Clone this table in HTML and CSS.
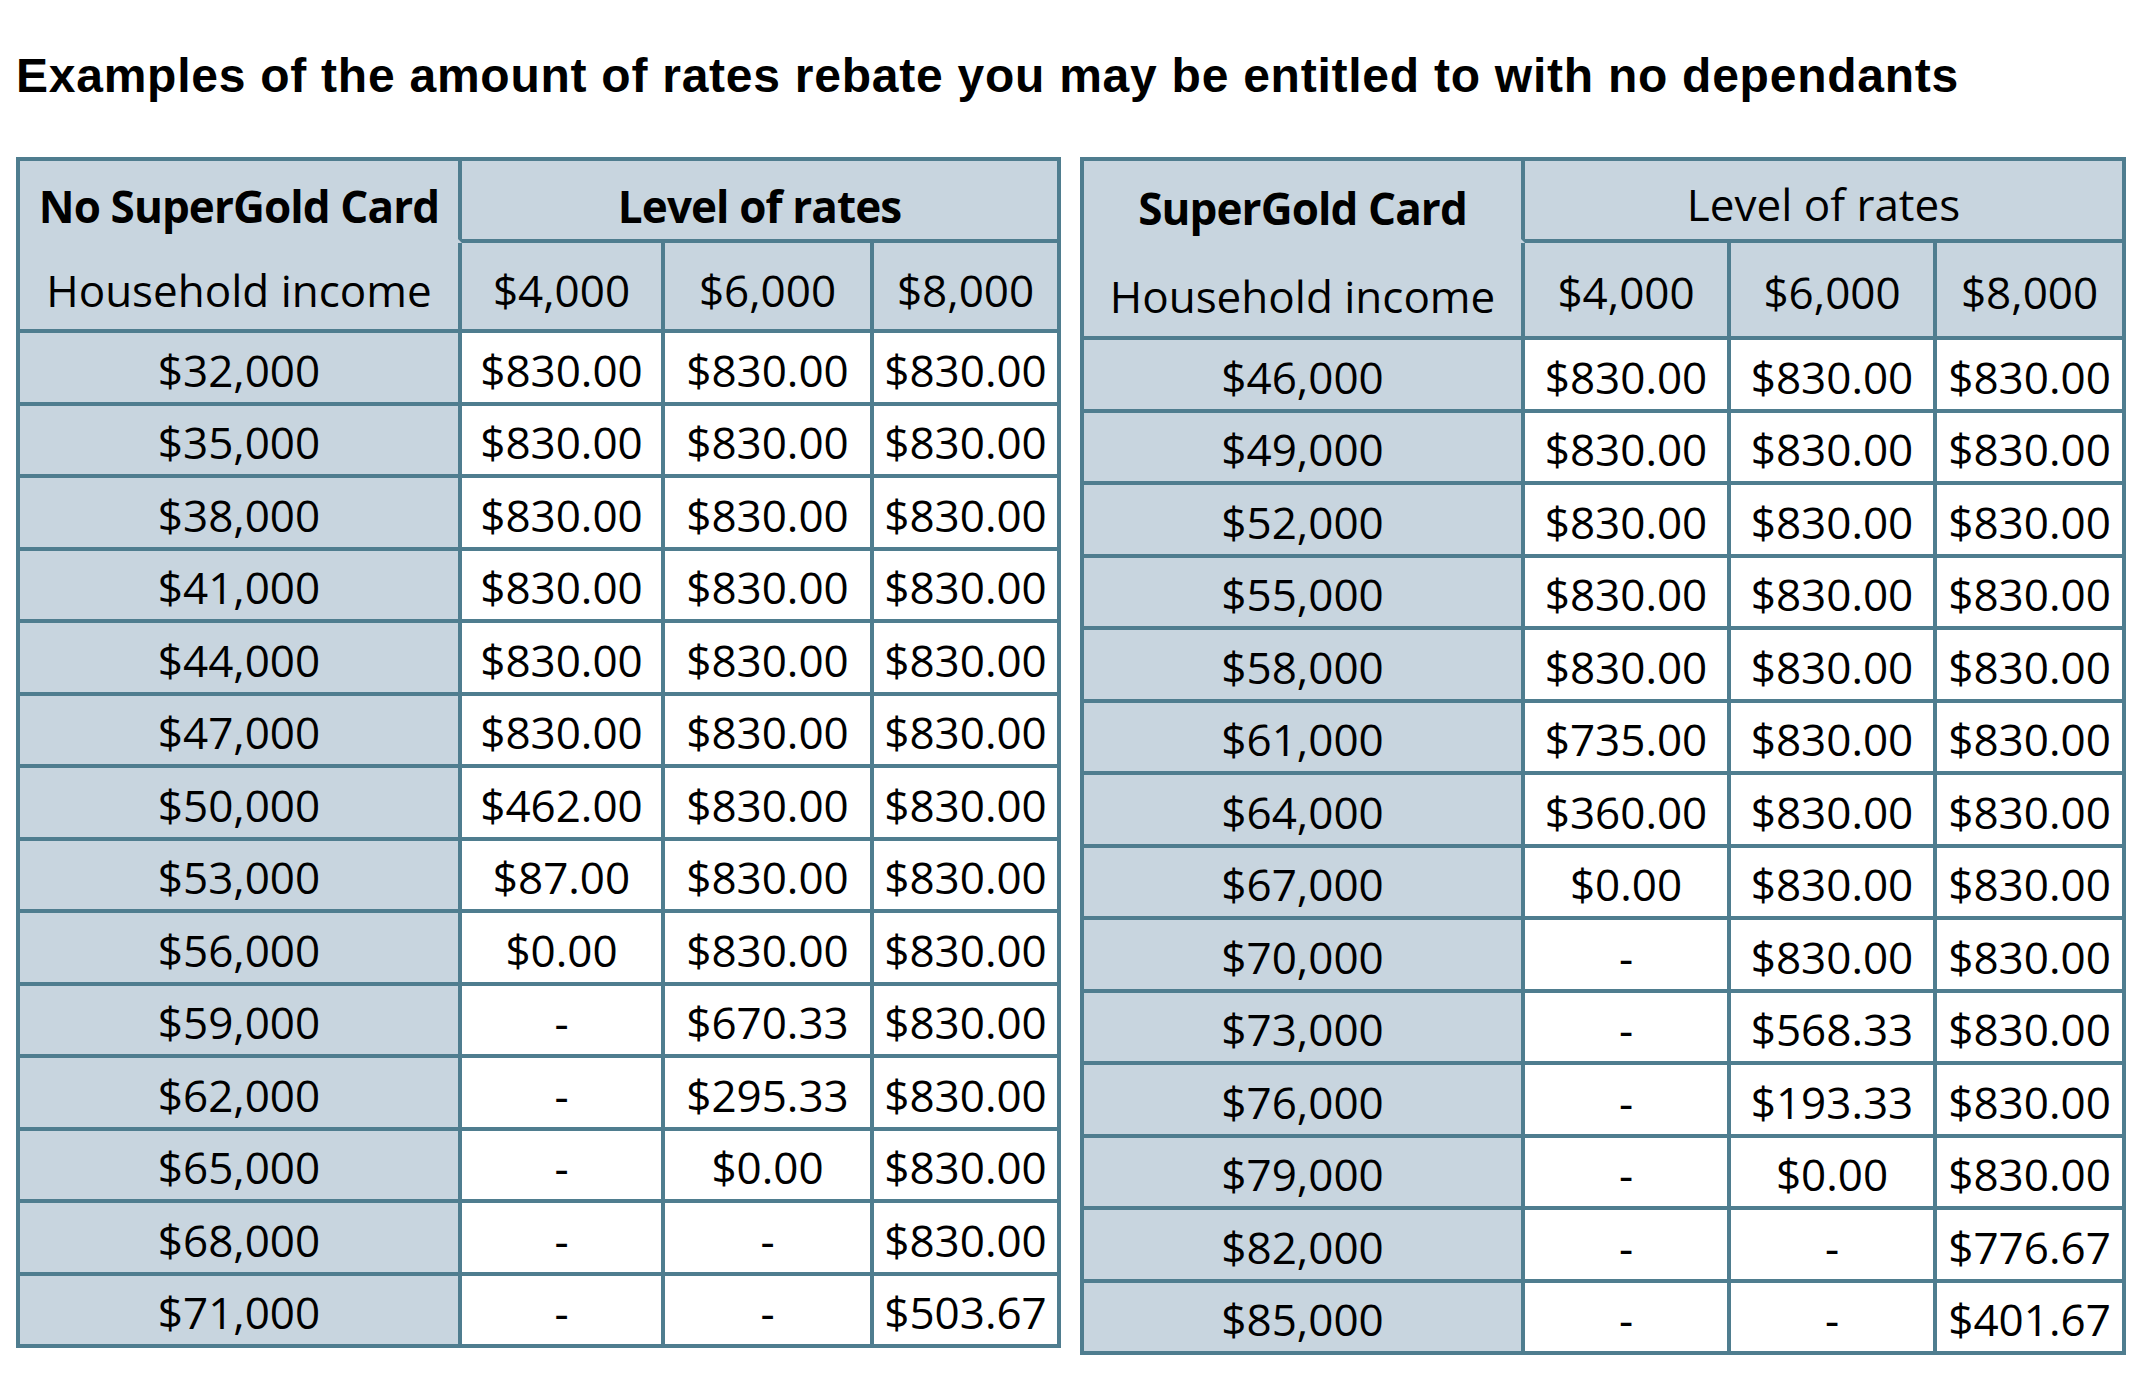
FILE: index.html
```html
<!DOCTYPE html>
<html lang="en">
<head>
<meta charset="utf-8">
<title>Rates rebate examples</title>
<link rel="stylesheet" href="styles.css">
</head>
<body>
<main class="page">
  <h1 class="title">Examples of the amount of rates rebate you may be entitled to with no dependants</h1>
  <div class="tables">
    <table class="rebate t1">
      <colgroup><col class="c1"><col class="c2"><col class="c3"><col class="c4"></colgroup>
      <thead>
        <tr class="hr1"><th class="inc inc-top bold">No SuperGold Card</th><th colspan="3" class="lvl bold">Level of rates</th></tr>
        <tr class="hr2"><th class="inc inc-bot">Household income</th><th>$4,000</th><th>$6,000</th><th>$8,000</th></tr>
      </thead>
      <tbody>
        <tr><th scope="row" class="inc">$32,000</th><td>$830.00</td><td>$830.00</td><td>$830.00</td></tr>
        <tr><th scope="row" class="inc">$35,000</th><td>$830.00</td><td>$830.00</td><td>$830.00</td></tr>
        <tr><th scope="row" class="inc">$38,000</th><td>$830.00</td><td>$830.00</td><td>$830.00</td></tr>
        <tr><th scope="row" class="inc">$41,000</th><td>$830.00</td><td>$830.00</td><td>$830.00</td></tr>
        <tr><th scope="row" class="inc">$44,000</th><td>$830.00</td><td>$830.00</td><td>$830.00</td></tr>
        <tr><th scope="row" class="inc">$47,000</th><td>$830.00</td><td>$830.00</td><td>$830.00</td></tr>
        <tr><th scope="row" class="inc">$50,000</th><td>$462.00</td><td>$830.00</td><td>$830.00</td></tr>
        <tr><th scope="row" class="inc">$53,000</th><td>$87.00</td><td>$830.00</td><td>$830.00</td></tr>
        <tr><th scope="row" class="inc">$56,000</th><td>$0.00</td><td>$830.00</td><td>$830.00</td></tr>
        <tr><th scope="row" class="inc">$59,000</th><td>-</td><td>$670.33</td><td>$830.00</td></tr>
        <tr><th scope="row" class="inc">$62,000</th><td>-</td><td>$295.33</td><td>$830.00</td></tr>
        <tr><th scope="row" class="inc">$65,000</th><td>-</td><td>$0.00</td><td>$830.00</td></tr>
        <tr><th scope="row" class="inc">$68,000</th><td>-</td><td>-</td><td>$830.00</td></tr>
        <tr><th scope="row" class="inc">$71,000</th><td>-</td><td>-</td><td>$503.67</td></tr>
      </tbody>
    </table>
    <table class="rebate t2">
      <colgroup><col class="c1"><col class="c2"><col class="c3"><col class="c4"></colgroup>
      <thead>
        <tr class="hr1"><th class="inc inc-top bold">SuperGold Card</th><th colspan="3" class="lvl">Level of rates</th></tr>
        <tr class="hr2"><th class="inc inc-bot">Household income</th><th>$4,000</th><th>$6,000</th><th>$8,000</th></tr>
      </thead>
      <tbody>
        <tr><th scope="row" class="inc">$46,000</th><td>$830.00</td><td>$830.00</td><td>$830.00</td></tr>
        <tr><th scope="row" class="inc">$49,000</th><td>$830.00</td><td>$830.00</td><td>$830.00</td></tr>
        <tr><th scope="row" class="inc">$52,000</th><td>$830.00</td><td>$830.00</td><td>$830.00</td></tr>
        <tr><th scope="row" class="inc">$55,000</th><td>$830.00</td><td>$830.00</td><td>$830.00</td></tr>
        <tr><th scope="row" class="inc">$58,000</th><td>$830.00</td><td>$830.00</td><td>$830.00</td></tr>
        <tr><th scope="row" class="inc">$61,000</th><td>$735.00</td><td>$830.00</td><td>$830.00</td></tr>
        <tr><th scope="row" class="inc">$64,000</th><td>$360.00</td><td>$830.00</td><td>$830.00</td></tr>
        <tr><th scope="row" class="inc">$67,000</th><td>$0.00</td><td>$830.00</td><td>$830.00</td></tr>
        <tr><th scope="row" class="inc">$70,000</th><td>-</td><td>$830.00</td><td>$830.00</td></tr>
        <tr><th scope="row" class="inc">$73,000</th><td>-</td><td>$568.33</td><td>$830.00</td></tr>
        <tr><th scope="row" class="inc">$76,000</th><td>-</td><td>$193.33</td><td>$830.00</td></tr>
        <tr><th scope="row" class="inc">$79,000</th><td>-</td><td>$0.00</td><td>$830.00</td></tr>
        <tr><th scope="row" class="inc">$82,000</th><td>-</td><td>-</td><td>$776.67</td></tr>
        <tr><th scope="row" class="inc">$85,000</th><td>-</td><td>-</td><td>$401.67</td></tr>
      </tbody>
    </table>
  </div>
</main>
</body>
</html>
```

FILE: styles.css
```css
html, body {
  margin: 0;
  padding: 0;
  background: #ffffff;
}

.page {
  padding: 49px 17px 0 16px;
  color: #000000;
}

.title {
  margin: 0 0 54px 0;
  font-family: "Liberation Sans", Arial, sans-serif;
  font-weight: 700;
  font-size: 48px;
  line-height: 54px;
  letter-spacing: 0.75px;
  white-space: nowrap;
}

.tables {
  display: flex;
  align-items: flex-start;
  gap: 19px;
}

.rebate {
  flex: none;
  table-layout: fixed;
  border-collapse: separate;
  border-spacing: 0;
  border-top: 4px solid #4f7d8f;
  border-left: 4px solid #4f7d8f;
  font-family: "Open Sans", "Noto Sans", sans-serif;
  font-size: 44px;
  line-height: 60px;
  color: #000000;
}

.t1 { width: 1045px; }
.t2 { width: 1046px; }

.t1 .c1 { width: 442px; }
.t1 .c2 { width: 203px; }
.t1 .c3 { width: 209px; }
.t1 .c4 { width: 187px; }

.t2 .c1 { width: 441px; }
.t2 .c2 { width: 206px; }
.t2 .c3 { width: 206px; }
.t2 .c4 { width: 189px; }

.rebate th,
.rebate td {
  padding: 0;
  border-right: 4px solid #4f7d8f;
  border-bottom: 4px solid #4f7d8f;
  text-align: center;
  vertical-align: middle;
  white-space: nowrap;
  font-weight: 400;
}

.rebate th {
  background: #c8d5df;
}

.rebate td {
  background: #ffffff;
}

.rebate .bold {
  font-weight: 700;
  letter-spacing: -0.9px;
}

.rebate .inc-top {
  border-bottom-color: #c8d5df;
}

.hr1 { height: 82px; }
.hr1 th { padding-top: 11px; }

.t1 .hr2 { height: 90px; }
.hr2 th { padding-top: 7px; }

.t2 .hr1 th { padding-top: 8px; }
.t2 .hr1 th.inc-top { padding-top: 15px; }
.t2 .hr2 { height: 97px; }
.t2 .hr2 th { padding-top: 4px; }
.t2 .hr2 th.inc-bot { padding-top: 12px; }

.rebate tbody tr { height: 72.5px; }
.rebate tbody th,
.rebate tbody td { padding-top: 5px; }
```
